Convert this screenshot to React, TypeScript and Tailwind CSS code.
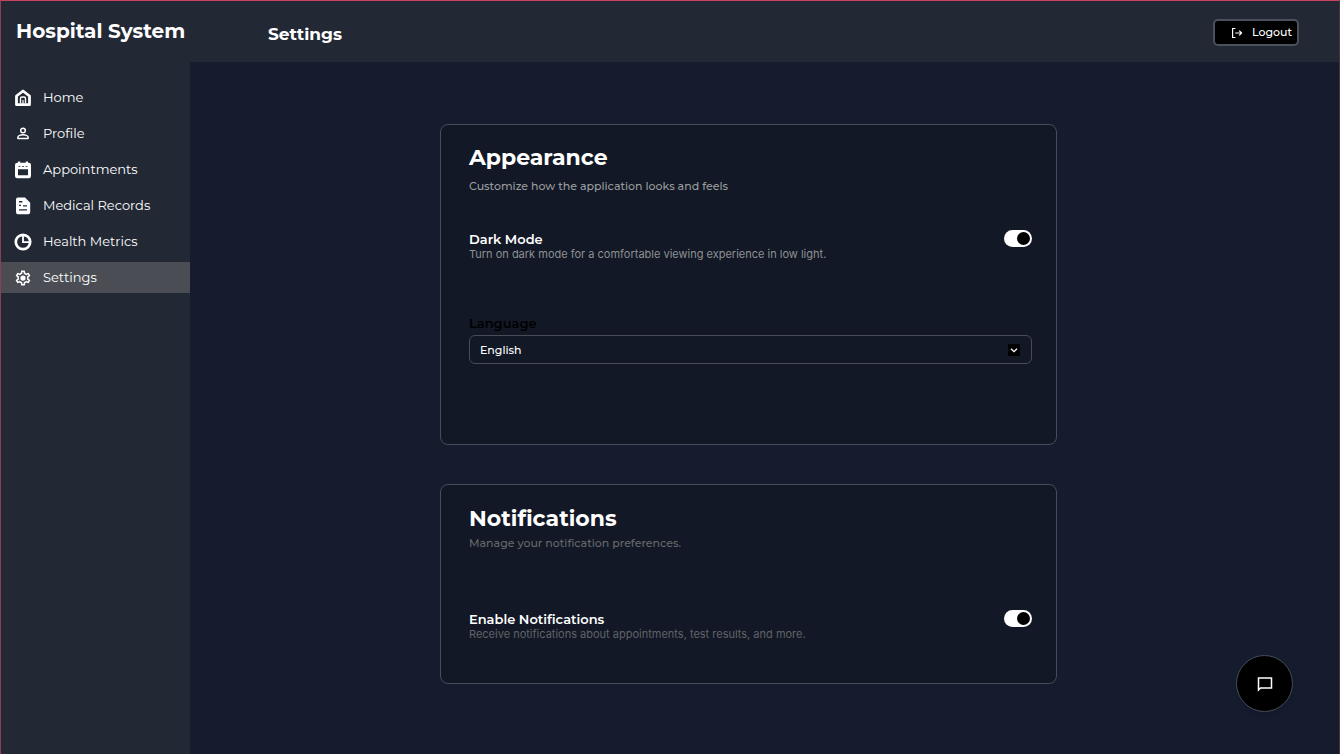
import { useState, type ReactNode } from "react";

function HomeIcon() {
  return (
    <svg viewBox="0 0 18 18" className="size-[18px]" fill="none" stroke="currentColor" strokeLinejoin="round" aria-hidden="true">
      <path d="M2.500 7 9 2l6.500 5v8.700h-13z" strokeWidth="2.800" />
      <path d="M6.500 14.500V9.500q0-1.500 1.500-1.500h2q1.500 0 1.500 1.500v5" strokeWidth="1.400" />
      <path d="M9 11v4" strokeWidth="1.200" />
    </svg>
  );
}

function ProfileIcon() {
  return (
    <svg viewBox="0 0 18 18" className="size-[18px]" fill="none" stroke="currentColor" strokeWidth="1.500" aria-hidden="true">
      <circle cx="9" cy="5.500" r="2.300" />
      <path d="M3.900 13.500v-1.200c0-1.700 3.300-2.500 5.100-2.500s5.100.8 5.100 2.500v1.200z" strokeLinejoin="round" />
    </svg>
  );
}

function CalendarIcon() {
  return (
    <svg viewBox="0 0 18 18" className="size-[18px]" aria-hidden="true">
      <path
        fill="currentColor"
        fillRule="evenodd"
        d="M4 .6h2.200v1.200h5.600V.6H14v1.200h.800a2.200 2.200 0 0 1 2.200 2.200v11a2.200 2.200 0 0 1-2.200 2.200H3.200A2.200 2.200 0 0 1 1 15V4a2.200 2.200 0 0 1 2.200-2.200H4zM4 8.200v6h10v-6zM4.500 4.900v.9h2v-.9zM8 4.900v.9h2v-.9zM11.500 4.900v.9h2v-.9z"
      />
    </svg>
  );
}

function RecordIcon() {
  return (
    <svg viewBox="0 0 18 18" className="size-[18px]" aria-hidden="true">
      <path
        fill="currentColor"
        fillRule="evenodd"
        d="M4 .6h7l5.200 5.200v9.400a2 2 0 0 1-2 2H4a2 2 0 0 1-2-2V2.600a2 2 0 0 1 2-2zM5 4v1.400h3.400V4zM5 7.800v1.100h2V7.800zM9 8.300v1.100h4V8.300zM5 12.300v1.200h8v-1.200z"
      />
    </svg>
  );
}

function MetricsIcon() {
  return (
    <svg viewBox="0 0 18 18" className="size-[18px]" fill="none" stroke="currentColor" aria-hidden="true">
      <circle cx="9" cy="9" r="7.200" strokeWidth="2.700" />
      <path d="M9 2v7.200h7" strokeWidth="1.800" />
    </svg>
  );
}

function GearIcon() {
  return (
    <svg viewBox="0 0 24 24" className="size-[18px]" aria-hidden="true">
      <path
        fill="currentColor"
        d="M19.430 12.980c.04-.32.07-.64.07-.98 0-.34-.03-.66-.07-.98l2.110-1.650c.19-.15.24-.42.12-.64l-2-3.460a.5.5 0 0 0-.61-.22l-2.490 1c-.52-.4-1.080-.73-1.690-.98l-.38-2.650A.49.49 0 0 0 14 2h-4c-.25 0-.46.18-.49.42l-.38 2.650c-.61.25-1.170.59-1.690.98l-2.490-1a.5.5 0 0 0-.61.22l-2 3.460c-.13.22-.07.49.12.64l2.110 1.650c-.04.32-.07.65-.07.98 0 .33.03.66.07.98l-2.110 1.650c-.19.15-.24.42-.12.64l2 3.460a.5.5 0 0 0 .61.22l2.490-1c.52.4 1.080.73 1.690.98l.38 2.650c.03.24.24.42.49.42h4c.25 0 .46-.18.49-.42l.38-2.650c.61-.25 1.170-.59 1.690-.98l2.490 1a.5.5 0 0 0 .61-.22l2-3.460a.5.5 0 0 0-.12-.64zm-1.980-1.710c.04.31.05.52.05.73s-.02.43-.05.73l-.14 1.130.89.7 1.080.84-.7 1.210-1.270-.51-1.040-.42-.9.68c-.43.32-.84.56-1.250.73l-1.060.43-.16 1.130-.2 1.350h-1.400l-.35-2.480-1.060-.43c-.43-.18-.83-.41-1.230-.71l-.91-.7-1.060.43-1.270.51-.7-1.210 1.080-.84.89-.7-.14-1.130c-.03-.31-.05-.54-.05-.74s.02-.43.05-.73l.14-1.130-.89-.7-1.080-.84.7-1.210 1.270.51 1.040.42.9-.68c.43-.32.84-.56 1.250-.73l1.060-.43.16-1.130.2-1.350h1.390l.35 2.480 1.060.43c.43.18.83.41 1.230.71l.91.7 1.060-.43 1.270-.51.7 1.210-1.070.85-.89.7zM12 8.500a3.500 3.500 0 1 0 0 7 3.500 3.500 0 0 0 0-7z"
      />
    </svg>
  );
}

function LogoutIcon() {
  return (
    <svg viewBox="0 0 12 12" className="size-3" fill="none" stroke="currentColor" strokeWidth="1.200" aria-hidden="true">
      <path d="M4.400 1.500H1.600v9h2.800" />
      <path d="M4.200 6h6.300M8.200 3.600 10.600 6 8.200 8.400" />
    </svg>
  );
}

type NavItem = { label: string; icon: ReactNode; active?: boolean };

const navItems: NavItem[] = [
  { label: "Home", icon: <HomeIcon /> },
  { label: "Profile", icon: <ProfileIcon /> },
  { label: "Appointments", icon: <CalendarIcon /> },
  { label: "Medical Records", icon: <RecordIcon /> },
  { label: "Health Metrics", icon: <MetricsIcon /> },
  { label: "Settings", icon: <GearIcon />, active: true },
];

type ToggleRowProps = {
  id: string;
  label: string;
  description: string;
  tone: string;
};

function ToggleRow({ id, label, description, tone }: ToggleRowProps) {
  const [on, setOn] = useState(true);
  return (
    <div className="flex items-start justify-between">
      <div className="pt-px">
        <label htmlFor={id} className="block text-[13px] leading-4 font-semibold text-white">
          {label}
        </label>
        <p id={`${id}-hint`} className={`font-['Inter',sans-serif] text-[11px] leading-[15px] ${tone}`}>
          {description}
        </p>
      </div>
      <input
        id={id}
        type="checkbox"
        role="switch"
        aria-describedby={`${id}-hint`}
        checked={on}
        onChange={(event) => setOn(event.target.checked)}
        className="flex h-[17px] w-7 shrink-0 appearance-none items-center rounded-full bg-gray-500 px-[2px] before:size-[13px] before:rounded-full before:bg-black checked:justify-end checked:bg-white"
      />
    </div>
  );
}

export default function App() {
  return (
    <div className="flex min-h-screen border-t border-r border-l border-t-[#c9415f] border-r-[#4a3142] border-l-[#913b56] bg-[#141c2e] font-['Montserrat','Inter',sans-serif] text-white">
      <aside className="w-[189px] shrink-0 bg-[#222935]">
        <p className="px-[15px] pt-4 text-xl leading-7 font-bold whitespace-nowrap">Hospital System</p>
        <nav aria-label="Main" className="mt-[37px]">
          <ul className="flex flex-col gap-[5px]">
            {navItems.map((item) => (
              <li key={item.label}>
                <a
                  href="#"
                  aria-current={item.active ? "page" : undefined}
                  className={`flex h-[31px] items-center gap-[11px] pl-[13px] text-[13px] ${item.active ? "bg-[#4a4e54]" : ""}`}
                >
                  {item.icon}
                  {item.label}
                </a>
              </li>
            ))}
          </ul>
        </nav>
      </aside>

      <div className="flex min-w-0 flex-1 flex-col">
        <header className="flex h-[61px] items-center justify-between bg-[#222935] pt-0.5 pr-10 pl-[78px]">
          <h1 className="pt-0.5 text-[17px] leading-6 font-bold">Settings</h1>
          <button
            type="button"
            className="flex h-[27px] items-center gap-[9px] rounded-[5px] border-2 border-[#4b515c] bg-black pr-[5px] pl-4 text-[11px] font-medium"
          >
            <LogoutIcon />
            Logout
          </button>
        </header>

        <main className="flex flex-1 flex-col items-center gap-[39px] pt-[62px] pr-8 pb-[70px]">
          <section className="w-full max-w-[617px] rounded-lg border border-[#474c57] bg-[#121825] pt-[19px] pr-6 pb-20 pl-7">
            <h2 className="text-[22px] leading-7 font-bold">Appearance</h2>
            <p className="mt-1.5 text-[11px] leading-4 font-medium text-[#9a9c9f]">Customize how the application looks and feels</p>
            <div className="mt-9">
              <ToggleRow
                id="dark-mode"
                label="Dark Mode"
                description="Turn on dark mode for a comfortable viewing experience in low light."
                tone="text-[#8e9094]"
              />
            </div>
            <div className="mt-[53px]">
              <label htmlFor="language" className="block text-[13px] leading-4 font-semibold text-black">
                Language
              </label>
              <div className="relative mt-1">
                <select
                  id="language"
                  className="block h-[29px] w-full appearance-none rounded-md border border-[#474c57] bg-[#121825] px-2.5 pt-px text-[11px] font-medium text-white"
                >
                  <option>English</option>
                </select>
                <span className="pointer-events-none absolute inset-y-0 right-3 flex items-center">
                  <svg viewBox="0 0 12 12" className="size-3 bg-black" fill="none" stroke="white" strokeWidth="1.300" aria-hidden="true">
                    <path d="m3 4.700 3 2.900 3-2.900" />
                  </svg>
                </span>
              </div>
            </div>
          </section>

          <section className="w-full max-w-[617px] rounded-lg border border-[#474c57] bg-[#121825] pt-5 pr-6 pb-[41px] pl-7">
            <h2 className="text-[22px] leading-7 font-bold">Notifications</h2>
            <p className="mt-0.5 text-[11px] leading-4 font-medium text-[#65686d]">Manage your notification preferences.</p>
            <div className="mt-[59px]">
              <ToggleRow
                id="notifications"
                label="Enable Notifications"
                description="Receive notifications about appointments, test results, and more."
                tone="text-[#606368]"
              />
            </div>
          </section>
        </main>
      </div>

      <button
        type="button"
        aria-label="Open chat"
        className="fixed right-[47px] bottom-[42px] flex size-[57px] items-center justify-center rounded-full border border-[#474c57] bg-black shadow-md"
      >
        <svg viewBox="0 0 16 16" className="size-4" fill="none" stroke="currentColor" strokeWidth="1.500" aria-hidden="true">
          <path d="M1.500 14V2h13v10h-11z" />
        </svg>
      </button>
    </div>
  );
}
